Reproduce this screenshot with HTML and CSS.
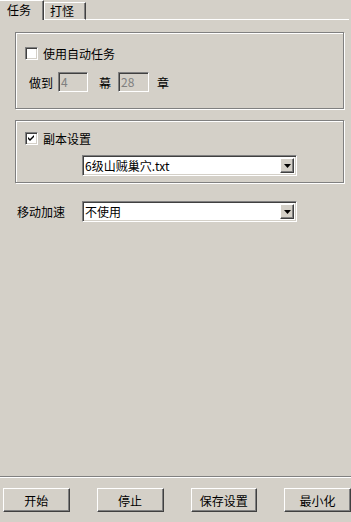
FILE: index.html
```html
<!DOCTYPE html>
<html lang="zh-CN">
<head>
  <meta charset="UTF-8">
  <title>设置</title>
  <link rel="stylesheet" href="styles.css">
</head>
<body>

<div class="window">
  <div class="tabs">
    <div class="tab active">任务</div>
    <div class="tab">打怪</div>
    <div class="tab-rest"></div>
  </div>

  <div class="panel">
    <div class="group group-task">
      <div class="check-row">
        <span class="check"></span>
        <span>使用自动任务</span>
      </div>
      <div class="progress-row">
        <span class="lbl-do">做到</span>
        <span class="field field-act">4</span>
        <span class="lbl-act">幕</span>
        <span class="field field-chapter">28</span>
        <span class="lbl-chapter">章</span>
      </div>
    </div>

    <div class="group group-copy">
      <div class="check-row">
        <span class="check">
          <svg width="7" height="7" viewBox="0 0 7 7"><path d="M0 2 L2 4 L6 0 L6 2 L2 6 L0 4 Z" fill="#000"/></svg>
        </span>
        <span>副本设置</span>
      </div>
      <div class="select select-copy">
        <span class="select-text">6级山贼巢穴.txt</span>
        <span class="select-btn">
          <svg width="7" height="4" viewBox="0 0 7 4"><path d="M0 0 H7 L3.5 4 Z" fill="#000"/></svg>
        </span>
      </div>
    </div>

    <div class="speed-row">
      <span class="speed-label">移动加速</span>
      <div class="select">
        <span class="select-text">不使用</span>
        <span class="select-btn">
          <svg width="7" height="4" viewBox="0 0 7 4"><path d="M0 0 H7 L3.5 4 Z" fill="#000"/></svg>
        </span>
      </div>
    </div>
  </div>

  <div class="sep"></div>

  <div class="buttons">
    <button>开始</button>
    <button>停止</button>
    <button>保存设置</button>
    <button>最小化</button>
  </div>
</div>

</body>
</html>
```

FILE: styles.css
```css
* {
  box-sizing: border-box;
}

body {
  margin: 0;
  padding: 0;
  background-color: #d4d0c8;
  font-family: "Noto Sans CJK SC", "Noto Sans", sans-serif;
  font-size: 12px;
  color: #000;
}

.window {
  width: 351px;
  height: 522px;
  display: flex;
  flex-direction: column;
}

/* tab strip */
.tabs {
  height: 20px;
  display: flex;
  align-items: flex-end;
}

.tab {
  height: 18px;
  width: 42px;
  padding-left: 5px;
  line-height: 16px;
  border-top: 1px solid #fff;
  border-left: 1px solid #fff;
  border-right: 1px solid #404040;
  border-bottom: 1px solid #fff;
  box-shadow: inset -1px 0 0 #808080;
}

.tab.active {
  height: 20px;
  width: 44px;
  padding-left: 7px;
  line-height: 18px;
  border-bottom: none;
  border-left: none;
}

.tab-rest {
  flex: 1;
  height: 1px;
  margin-right: 2px;
  background-color: #fff;
}

/* page body */
.panel {
  height: 456px;
  padding: 12px 0 0 15px;
}

.group {
  width: 329px;
  border: 1px solid #808080;
  box-shadow: inset 1px 1px 0 #fff, 1px 1px 0 #fff;
  padding-left: 9px;
}

.group-task {
  height: 77px;
  padding-top: 14px;
}

.group-copy {
  height: 63px;
  margin-top: 11px;
  padding-top: 11px;
}

.check-row {
  height: 13px;
  display: flex;
  align-items: center;
  gap: 5px;
}

.check {
  width: 13px;
  height: 13px;
  display: flex;
  align-items: center;
  justify-content: center;
  background-color: #fff;
  border-top: 1px solid #808080;
  border-left: 1px solid #808080;
  border-bottom: 1px solid #fff;
  border-right: 1px solid #fff;
  box-shadow: inset 1px 1px 0 #404040, inset -1px -1px 0 #d4d0c8;
}

.progress-row {
  height: 20px;
  margin-top: 12px;
  display: flex;
  align-items: center;
}

.lbl-do {
  margin-left: 4px;
  margin-right: 5px;
}

.lbl-act {
  margin: 0 7px 0 11px;
}

.lbl-chapter {
  margin-left: 8px;
}

.field {
  height: 20px;
  width: 30px;
  padding-left: 2px;
  line-height: 18px;
  color: #808080;
  border-top: 1px solid #808080;
  border-left: 1px solid #808080;
  border-bottom: 1px solid #fff;
  border-right: 1px solid #fff;
  box-shadow: inset 1px 1px 0 #404040;
}

.field-chapter {
  width: 31px;
}

/* combo boxes */
.select {
  width: 215px;
  height: 21px;
  display: flex;
  align-items: center;
  background-color: #fff;
  border-top: 1px solid #808080;
  border-left: 1px solid #808080;
  border-bottom: 1px solid #fff;
  border-right: 1px solid #fff;
  box-shadow: inset 1px 1px 0 #404040, inset -1px -1px 0 #d4d0c8;
  padding: 2px 2px 2px 2px;
}

.select-copy {
  margin-top: 10px;
  margin-left: 57px;
}

.select-text {
  flex: 1;
  line-height: 15px;
}

.select-btn {
  width: 14px;
  height: 15px;
  display: flex;
  align-items: center;
  justify-content: center;
  background-color: #d4d0c8;
  border-top: 1px solid #fff;
  border-left: 1px solid #fff;
  border-right: 1px solid #404040;
  border-bottom: 1px solid #404040;
  box-shadow: inset -1px -1px 0 #808080;
}

.speed-row {
  margin-top: 18px;
  display: flex;
  align-items: center;
}

.speed-label {
  margin-left: 2px;
  width: 65px;
}

/* bottom */
.sep {
  height: 2px;
  border-top: 1px solid #808080;
  border-bottom: 1px solid #fff;
}

.buttons {
  padding: 10px 0 0 3px;
  display: flex;
  gap: 27px;
}

button {
  width: 67px;
  height: 24px;
  padding: 0;
  font-family: inherit;
  font-size: 12px;
  color: #000;
  background-color: #d4d0c8;
  border-top: 1px solid #fff;
  border-left: 1px solid #fff;
  border-right: 1px solid #404040;
  border-bottom: 1px solid #404040;
  box-shadow: inset -1px -1px 0 #808080;
}
```
